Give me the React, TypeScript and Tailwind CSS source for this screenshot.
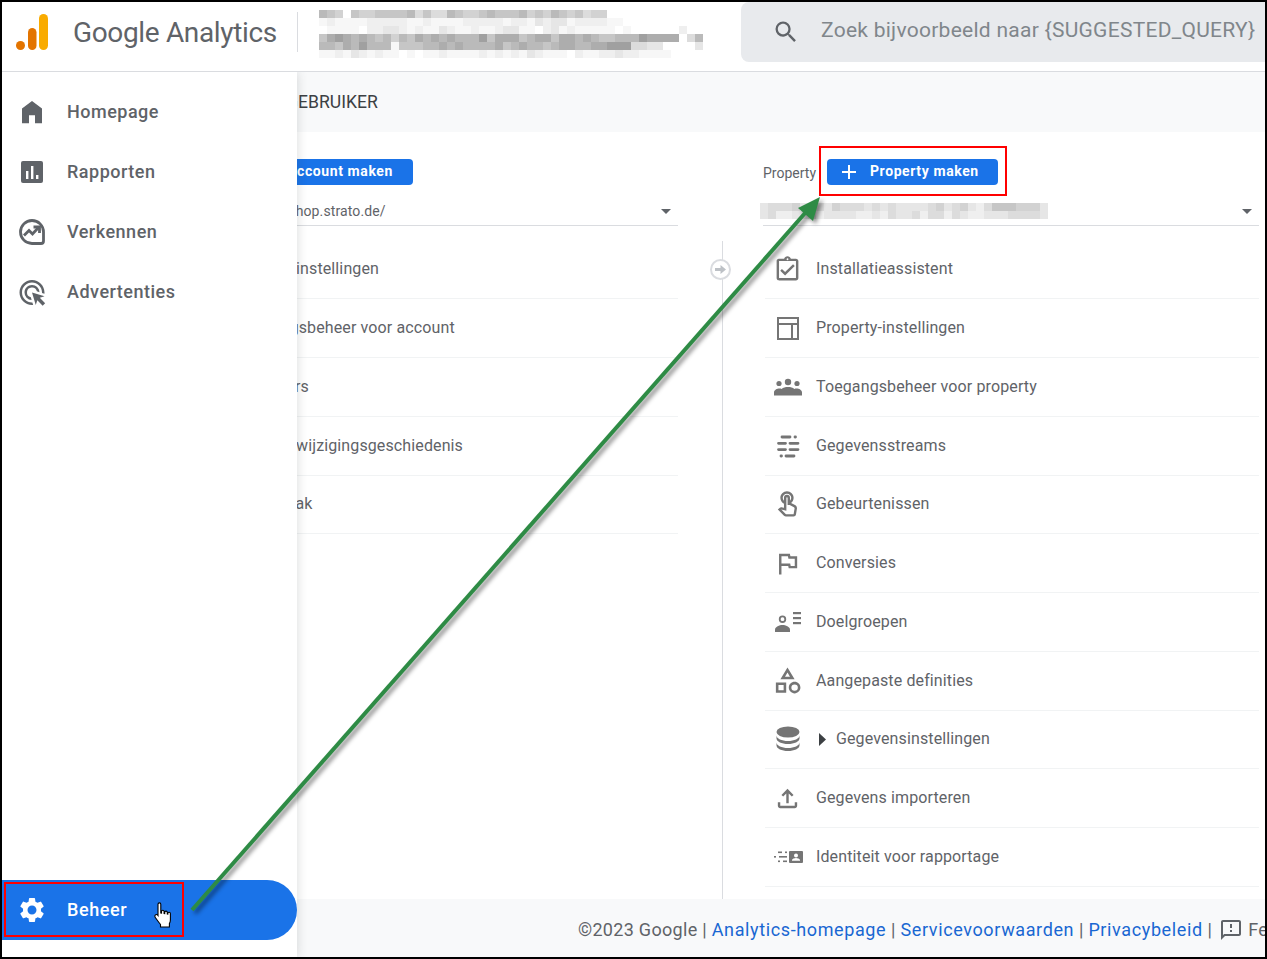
import type { ReactNode } from "react";
import {
  MdAdd,
  MdAdsClick,
  MdArrowDropDown,
  MdOutlineAssignmentTurnedIn,
  MdOutlineCategory,
  MdOutlineFeedback,
  MdOutlineFileUpload,
  MdOutlineFlag,
  MdOutlineTouchApp,
  MdSearch,
  MdSettings,
} from "react-icons/md";

const GRAYS = ["#ffffff", "#f7f7f7", "#efefef", "#e6e6e6", "#dcdcdc", "#d2d2d2", "#c6c6c6", "#bababa", "#adadad", "#a0a0a0"];

const titleBlur = [
  "0000000000000000000000000000000000000000000000000",
  "7650655666674644765567666756576564550000000000000",
  "1211112222211211112222212213233122221100000000000",
  "0111102233212113211211233110231211111010000002000",
  "6898787675768787877796888678868878766777988880470",
  "7768797771666778787777867877678877889994433000030",
  "1121321211010112111121212132111021122322111100000",
];

const propertyBlur = [
  "344453343544434343333453453246665553",
  "342233423333223243342442432233344443",
];

function Pixelated({ rows, cell, className }: { rows: string[]; cell: number; className?: string }) {
  const cols = rows[0].length;
  return (
    <svg width={cols * cell} height={rows.length * cell} shapeRendering="crispEdges" className={className}>
      {rows.map((row, y) =>
        row.split("").map((c, x) => (
          <rect key={`${x}-${y}`} x={x * cell} y={y * cell} width={cell} height={cell} fill={GRAYS[Number(c)]} />
        ))
      )}
    </svg>
  );
}

function AnalyticsLogo() {
  return (
    <svg width="34" height="38" viewBox="0 0 34 38">
      <rect x="24" y="1" width="9" height="36" rx="4.5" fill="#f9ab00" />
      <rect x="13" y="15" width="8.5" height="22" rx="4.25" fill="#e37400" />
      <circle cx="5.5" cy="32.5" r="4.5" fill="#e37400" />
    </svg>
  );
}

function HomeIcon() {
  return (
    <svg width="30" height="30" viewBox="0 0 24 24" fill="#5f6368">
      <path d="M12 3.2 4 9.2V21h5.6v-6.4h4.8V21H20V9.2z" />
    </svg>
  );
}

function ReportsIcon() {
  return (
    <svg width="28" height="28" viewBox="0 0 28 28">
      <rect x="3" y="3" width="22" height="22" rx="2" fill="#5f6368" />
      <rect x="8" y="13" width="2.4" height="8" fill="#fff" />
      <rect x="13" y="8" width="2.4" height="13" fill="#fff" />
      <rect x="18" y="17" width="2.4" height="4" fill="#fff" />
    </svg>
  );
}

function ExploreIcon() {
  return (
    <svg width="30" height="30" viewBox="0 0 30 30" fill="none" stroke="#5f6368" strokeWidth="2.8">
      <path d="M15 3.5A11.5 11.5 0 0 1 26.5 15v9a2.5 2.5 0 0 1-2.5 2.5h-9a11.5 11.5 0 0 1 0-23z" />
      <path d="m7 18.500 5-5 3.500 3.500 6-6.500" />
      <path d="M16.500 10h6v6" />
      <circle cx="23.500" cy="23.500" r="1" fill="#fff" stroke="none" />
    </svg>
  );
}

function PropertySettingsIcon() {
  return (
    <svg width="24" height="24" viewBox="0 0 24 24" fill="none" stroke="#757575" strokeWidth="2">
      <rect x="2" y="2" width="20" height="21" />
      <path d="M2 8h20M16 8v15" />
    </svg>
  );
}

function PeopleIcon() {
  return (
    <svg width="28" height="18" viewBox="0 0 28 18" fill="#757575">
      <circle cx="5" cy="5.500" r="2.600" />
      <circle cx="14" cy="4" r="3.200" />
      <circle cx="23" cy="5.500" r="2.600" />
      <path d="M0 17.500v-3C0 12 3 10.500 5.500 10.500c.8 0 1.500.1 2.200.4C9 9.500 11.500 9 14 9s5 .5 6.300 1.900c.7-.3 1.400-.4 2.200-.4 2.500 0 5.500 1.500 5.500 4v3z" />
    </svg>
  );
}

function StreamsIcon() {
  return (
    <svg width="24" height="24" viewBox="0 0 24 24" fill="none" stroke="#757575" strokeWidth="2.8" strokeLinecap="round">
      <path d="M6 3h8M19 3h.5" />
      <path d="M2.500 9.300h7M14 9.300h8" />
      <path d="M2.500 15.600h7M14 15.600h8" />
      <path d="M5 22h.5M10 22h8" />
    </svg>
  );
}

function AudienceIcon() {
  return (
    <svg width="28" height="22" viewBox="0 0 28 22" fill="#757575">
      <path d="M8.500 4.500a3.700 3.700 0 1 1 0 7.400 3.700 3.700 0 0 1 0-7.400zm0 1.800a1.900 1.900 0 1 0 0 3.800 1.900 1.900 0 0 0 0-3.800z" fillRule="evenodd" />
      <path d="M1 21v-2.500c0-2.500 4.500-4.500 7.500-4.500s7.500 2 7.500 4.500V21z" />
      <rect x="19" y="1" width="8" height="2.200" />
      <rect x="19" y="6" width="8" height="2.200" />
      <rect x="19" y="11" width="8" height="2.200" />
    </svg>
  );
}

function DatabaseIcon() {
  return (
    <svg width="24" height="26" viewBox="0 0 24 26" fill="#757575">
      <ellipse cx="12" cy="6" rx="11.5" ry="5.5" />
      <path d="M.5 9.500v3c0 3 5.200 5.500 11.500 5.500s11.500-2.500 11.500-5.500v-3c0 3-5.200 5.500-11.500 5.500S.5 12.500.5 9.500z" />
      <path d="M.5 16.500v3c0 3 5.200 5.500 11.500 5.500s11.500-2.500 11.500-5.500v-3c0 3-5.200 5.500-11.500 5.500S.5 19.500.5 16.500z" />
    </svg>
  );
}

function IdentityIcon() {
  return (
    <svg width="30" height="14" viewBox="0 0 30 14" fill="#757575">
      <rect x="5" y="1.500" width="4" height="1.600" />
      <rect x="12" y="1.500" width="2" height="1.600" />
      <rect x="1" y="6" width="2" height="1.600" />
      <rect x="6" y="6" width="8" height="1.600" />
      <rect x="5" y="10.500" width="2" height="1.600" />
      <rect x="10" y="10.500" width="4" height="1.600" />
      <path d="M17 1h12a1 1 0 0 1 1 1v10a1 1 0 0 1-1 1H17a1 1 0 0 1-1-1V2a1 1 0 0 1 1-1zm6 2.500a2 2 0 1 0 0 4 2 2 0 0 0 0-4zM19 10.800h8V10c0-1.300-2.700-2-4-2s-4 .7-4 2z" fillRule="evenodd" />
    </svg>
  );
}

function HandCursor() {
  return (
    <svg width="20" height="28" viewBox="0 0 20 28" className="absolute left-[151px] top-[22px]">
      <path
        d="M5 2.300a1.400 1.400 0 0 1 2.800 0V11l.7.1V9.500a1.300 1.300 0 0 1 2.600 0v2l.6.100v-1.200a1.300 1.300 0 0 1 2.600 0v1.700l.5.100v-.7a1.300 1.300 0 0 1 2.600 0v6.500c0 1.500-.4 2.500-1 3.500v3.500H7.500v-2.500C6 20.500 4 18 2.300 15.500c-.8-1.200-.5-2.300.4-2.800.9-.4 1.700 0 2.300.8z"
        fill="#fff"
        stroke="#000"
        strokeWidth="1.1"
      />
    </svg>
  );
}

interface NavItemProps {
  icon: ReactNode;
  label: string;
}

function NavItem({ icon, label }: NavItemProps) {
  return (
    <div className="flex h-[60px] items-center pl-[15px] text-[18px] font-medium tracking-[0.5px] text-[#5f6368]">
      <span className="flex w-[30px] justify-center">{icon}</span>
      <span className="-mt-[2px] ml-[20px]">{label}</span>
    </div>
  );
}

function Sidebar() {
  return (
    <aside className="relative z-10 flex w-[295px] shrink-0 flex-col justify-between bg-white pb-[17px] pt-[10px] shadow-[0_0_10px_rgba(60,64,67,0.2)]">
      <nav>
        <NavItem icon={<HomeIcon />} label="Homepage" />
        <NavItem icon={<ReportsIcon />} label="Rapporten" />
        <NavItem icon={<ExploreIcon />} label="Verkennen" />
        <NavItem icon={<MdAdsClick size={31} color="#5f6368" />} label="Advertenties" />
      </nav>
      <div className="relative flex h-[60px] items-center rounded-r-[30px] bg-[#1a73e8] pl-[15px] text-[18px] font-medium tracking-[0.6px] text-white">
        <span className="flex w-[30px] justify-center">
          <MdSettings size={32} />
        </span>
        <span className="-mt-[2px] ml-[20px]">Beheer</span>
        <HandCursor />
        <span className="absolute left-[2px] top-[2px] h-[55px] w-[180px] border-2 border-[#ff0000]" />
      </div>
    </aside>
  );
}

interface RowProps {
  icon?: ReactNode;
  label: string;
  expandable?: boolean;
}

function Row({ icon, label, expandable }: RowProps) {
  return (
    <div className="flex h-[58.75px] items-center border-b border-[#f1f3f4]">
      <span className="flex w-[45px] justify-center">{icon}</span>
      {expandable ? (
        <svg width="7" height="13" viewBox="0 0 7 13" fill="#3c4043" className="ml-[9px] mr-[10px]">
          <path d="M0 0l7 6.500L0 13z" />
        </svg>
      ) : null}
      <span className={expandable ? "" : "ml-[6px]"}>{label}</span>
    </div>
  );
}

function Header() {
  return (
    <header className="relative z-20 flex h-[70px] shrink-0 border-b border-[#dadce0] bg-white">
      <div className="flex h-[60px] w-[295px] shrink-0 items-center pl-[13px]">
        <AnalyticsLogo />
        <span className="ml-[24px] pt-[2px] text-[28px] tracking-[-0.35px] text-[#5f6368]">Google Analytics</span>
      </div>
      <div className="mt-[10px] h-[40px] w-px bg-[#dadce0]" />
      <div className="ml-[21px] w-[422px] shrink-0">
        <Pixelated rows={titleBlur} cell={8} />
      </div>
      <div className="flex h-[60px] flex-1 items-center rounded-l-lg bg-[#e8eaed] pl-[31px]">
        <MdSearch size={28} color="#5f6368" />
        <span className="-mt-[3px] ml-[21px] whitespace-nowrap text-[21px] tracking-[0.27px] text-[#80868b]">
          Zoek bijvoorbeeld naar {"{SUGGESTED_QUERY}"}
        </span>
      </div>
    </header>
  );
}

function AccountColumn() {
  return (
    <div className="w-[496px] shrink-0">
      <div className="flex h-[26px] items-center">
        <span className="ml-[8px] w-[47px] text-[14px] tracking-normal">Account</span>
        <button className="flex h-[26px] w-[176px] items-center rounded bg-[#1a73e8] pb-[2px] pl-[50px] text-[14px] font-bold tracking-[0.6px] text-white">
          Account maken
        </button>
      </div>
      <div className="flex h-[41px] items-center justify-between border-b border-[#dadce0] pl-[60px] pt-[12px] text-[14px]">
        <span>https://shop.strato.de/</span>
        <MdArrowDropDown size={24} color="#5f6368" />
      </div>
      <div className="ml-[3px] mt-[14.6px]">
        <Row label="Accountinstellingen" />
        <Row label="Toegangsbeheer voor account" />
        <Row label="Alle filters" />
        <Row label="Accountwijzigingsgeschiedenis" />
        <Row label="Prullenbak" />
      </div>
    </div>
  );
}

function PropertyColumn() {
  const icon = "#757575";
  return (
    <div className="w-[496px] shrink-0">
      <div className="flex h-[26px] items-center">
        <span className="w-[64px] pt-[2px] text-[14px] tracking-normal">Property</span>
        <button className="relative flex h-[26px] w-[171px] items-center rounded bg-[#1a73e8] pl-[10px] text-[14px] font-bold tracking-[0.6px] text-white">
          <MdAdd size={24} />
          <span className="-mt-[2px] ml-[9px]">Property maken</span>
          <span className="absolute -bottom-[11px] -left-[8px] -right-[9px] -top-[13px] border-2 border-[#ff0000]" />
        </button>
      </div>
      <div className="flex h-[41px] items-center justify-between border-b border-[#dadce0] pt-[12px]">
        <Pixelated rows={propertyBlur} cell={8} className="-ml-[3px]" />
        <MdArrowDropDown size={24} color="#5f6368" />
      </div>
      <div className="ml-[2px] mt-[14.6px]">
        <Row icon={<MdOutlineAssignmentTurnedIn size={29} color={icon} />} label="Installatieassistent" />
        <Row icon={<PropertySettingsIcon />} label="Property-instellingen" />
        <Row icon={<PeopleIcon />} label="Toegangsbeheer voor property" />
        <Row icon={<StreamsIcon />} label="Gegevensstreams" />
        <Row icon={<MdOutlineTouchApp size={29} color={icon} />} label="Gebeurtenissen" />
        <Row icon={<MdOutlineFlag size={29} color={icon} />} label="Conversies" />
        <Row icon={<AudienceIcon />} label="Doelgroepen" />
        <Row icon={<MdOutlineCategory size={31} color={icon} />} label="Aangepaste definities" />
        <Row icon={<DatabaseIcon />} label="Gegevensinstellingen" expandable />
        <Row icon={<MdOutlineFileUpload size={29} color={icon} />} label="Gegevens importeren" />
        <Row icon={<IdentityIcon />} label="Identiteit voor rapportage" />
      </div>
    </div>
  );
}

function Main() {
  return (
    <main className="-ml-[115px] flex min-w-0 flex-1 flex-col overflow-hidden">
      <div className="flex h-[60px] shrink-0 items-center bg-[#f8f9fa] pl-[104px] text-[17.6px] text-[#3c4043]">GEBRUIKER</div>
      <div className="flex flex-1 bg-white pt-[27px] text-[16px] tracking-[0.12px] text-[#5f6368]">
        <AccountColumn />
        <div className="relative ml-[44px] mr-[40px] mt-[82px] w-px shrink-0 bg-[#dadce0]">
          <span className="absolute -left-[12px] top-[18px] flex h-[21px] w-[21px] items-center justify-center rounded-full border-2 border-[#dadce0] bg-white">
            <svg width="11" height="9" viewBox="0 0 11 9" fill="#bdc1c6">
              <path d="M0 3h5.500V0L11 4.500 5.500 9V6H0z" />
            </svg>
          </span>
        </div>
        <PropertyColumn />
      </div>
      <footer className="flex h-[58px] shrink-0 items-center whitespace-nowrap bg-[#f8f9fa] pl-[396px] pt-[3px] text-[18px] tracking-[0.3px] text-[#5f6368]">
        <span>©2023 Google |&nbsp;</span>
        <span className="tracking-[0.62px] text-[#1967d2]">Analytics-homepage</span>
        <span>&nbsp;|&nbsp;</span>
        <span className="tracking-[0.62px] text-[#1967d2]">Servicevoorwaarden</span>
        <span>&nbsp;|&nbsp;</span>
        <span className="tracking-[0.62px] text-[#1967d2]">Privacybeleid</span>
        <span>&nbsp;|</span>
        <MdOutlineFeedback size={24} className="ml-[7px] mr-[5px] shrink-0" />
        <span>Feedback</span>
      </footer>
    </main>
  );
}

function GreenArrow() {
  return (
    <svg
      width="1263"
      height="955"
      viewBox="2 2 1263 955"
      className="pointer-events-none absolute left-0 top-0 z-30 drop-shadow-[3px_3px_2px_rgba(0,0,0,0.45)]"
    >
      <path d="M192 910 L806 212" stroke="#2e8b45" strokeWidth="4" fill="none" />
      <path d="M820 197 L798 208 L813 221 Z" fill="#2e8b45" />
    </svg>
  );
}

export default function App() {
  return (
    <div className="relative flex h-[959px] w-[1267px] flex-col overflow-hidden border-2 border-black bg-white font-['Roboto',sans-serif]">
      <Header />
      <div className="flex min-h-0 flex-1">
        <Sidebar />
        <Main />
      </div>
      <GreenArrow />
    </div>
  );
}
